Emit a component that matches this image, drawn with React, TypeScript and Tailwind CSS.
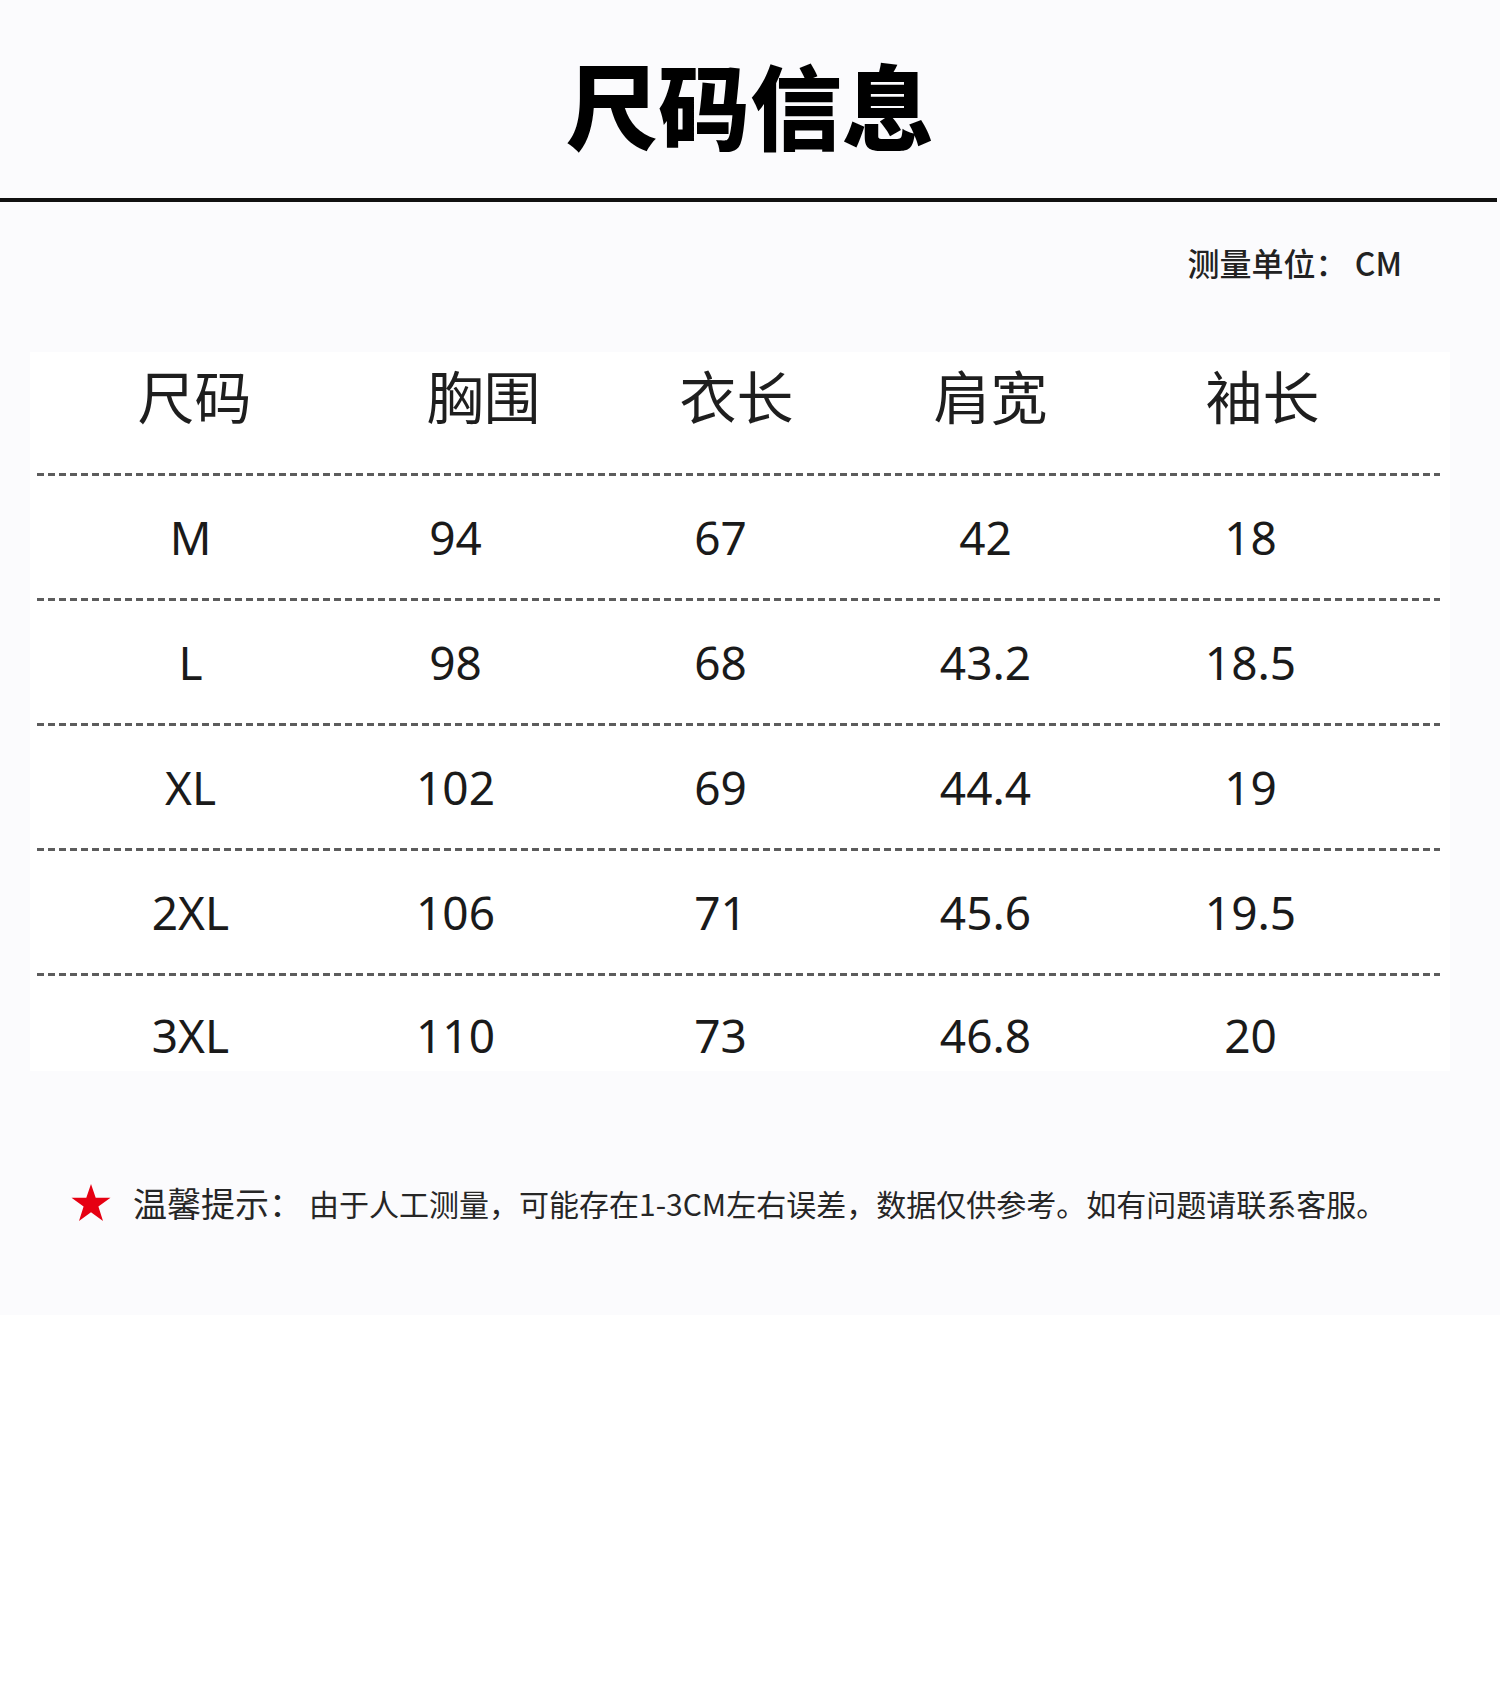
import React from "react";

const cjk = "font-['Noto_Sans_CJK_SC','Noto_Sans',sans-serif]";
const num = "font-['Noto_Sans','Noto_Sans_CJK_SC',sans-serif]";

const headers: { label: string; cls: string }[] = [
  { label: "尺码", cls: "pl-[8px]" },
  { label: "胸围", cls: "pl-[56px]" },
  { label: "衣长", cls: "pl-[32px]" },
  { label: "肩宽", cls: "pl-[10px]" },
  { label: "袖长", cls: "pl-[24px]" },
];

const rows: string[][] = [
  ["M", "94", "67", "42", "18"],
  ["L", "98", "68", "43.2", "18.5"],
  ["XL", "102", "69", "44.4", "19"],
  ["2XL", "106", "71", "45.6", "19.5"],
  ["3XL", "110", "73", "46.8", "20"],
];

function Dashed() {
  return (
    <div className="ml-[7px] mr-[10px] h-[3px] bg-[repeating-linear-gradient(90deg,#4a4a4a_0_7px,transparent_7px_11px)] opacity-90" />
  );
}

function Star() {
  return (
    <svg width="40" height="38" viewBox="0 0 40 38" className="shrink-0">
      <polygon
        points="20,0 24.7,13.8 39.5,13.8 27.4,22.6 32,37 20,28.2 8,37 12.6,22.6 0.5,13.8 15.3,13.8"
        fill="#e60012"
      />
    </svg>
  );
}

export default function App() {
  return (
    <div className={`w-[1500px] h-[1681px] bg-white ${cjk}`}>
      <div className="h-[1315px] bg-[#fbfbfd] pt-[57px]">
        <h1 className="h-[92px] text-center text-[92px] leading-none font-black text-black">
          尺码信息
        </h1>
        <div className="mt-[49px] h-[4px] w-[1497px] bg-[#111]" />
        <div className="mt-[44px] flex h-[32px] justify-end pr-[98px]">
          <span className="text-[32px] leading-none font-medium text-[#222]">
            测量单位：&nbsp;CM
          </span>
        </div>

        <div className="mt-[74px] ml-[30px] w-[1420px] bg-white">
          <div className="grid h-[84px] grid-cols-[265px_265px_265px_265px_265px] items-center pl-[28px]">
            {headers.map((h) => (
              <div
                key={h.label}
                className={`text-center text-[57px] leading-none font-normal text-[#1e1e1e] ${h.cls}`}
              >
                {h.label}
              </div>
            ))}
          </div>
          <div className="h-[37px]" />
          {rows.map((r, i) => (
            <div key={r[0]}>
              <Dashed />
              <div
                className={
                  i === rows.length - 1
                    ? "grid h-[95px] grid-cols-[265px_265px_265px_265px_265px] items-center pl-[28px] pt-[22px]"
                    : "grid h-[122px] grid-cols-[265px_265px_265px_265px_265px] items-center pl-[28px]"
                }
              >
                {r.map((c, j) => (
                  <div
                    key={j}
                    className={`text-center text-[46px] leading-none text-[#1a1a1a] ${num}`}
                  >
                    {c}
                  </div>
                ))}
              </div>
            </div>
          ))}
        </div>

        <div className="mt-[112px] flex h-[40px] items-center pl-[71px]">
          <Star />
          <span className="ml-[22px] text-[34px] leading-none text-[#262626]">
            温馨提示：
          </span>
          <span className="ml-[6px] text-[30px] leading-none text-[#262626]">
            由于人工测量，可能存在1-3CM左右误差，数据仅供参考。如有问题请联系客服。
          </span>
        </div>
      </div>
    </div>
  );
}
